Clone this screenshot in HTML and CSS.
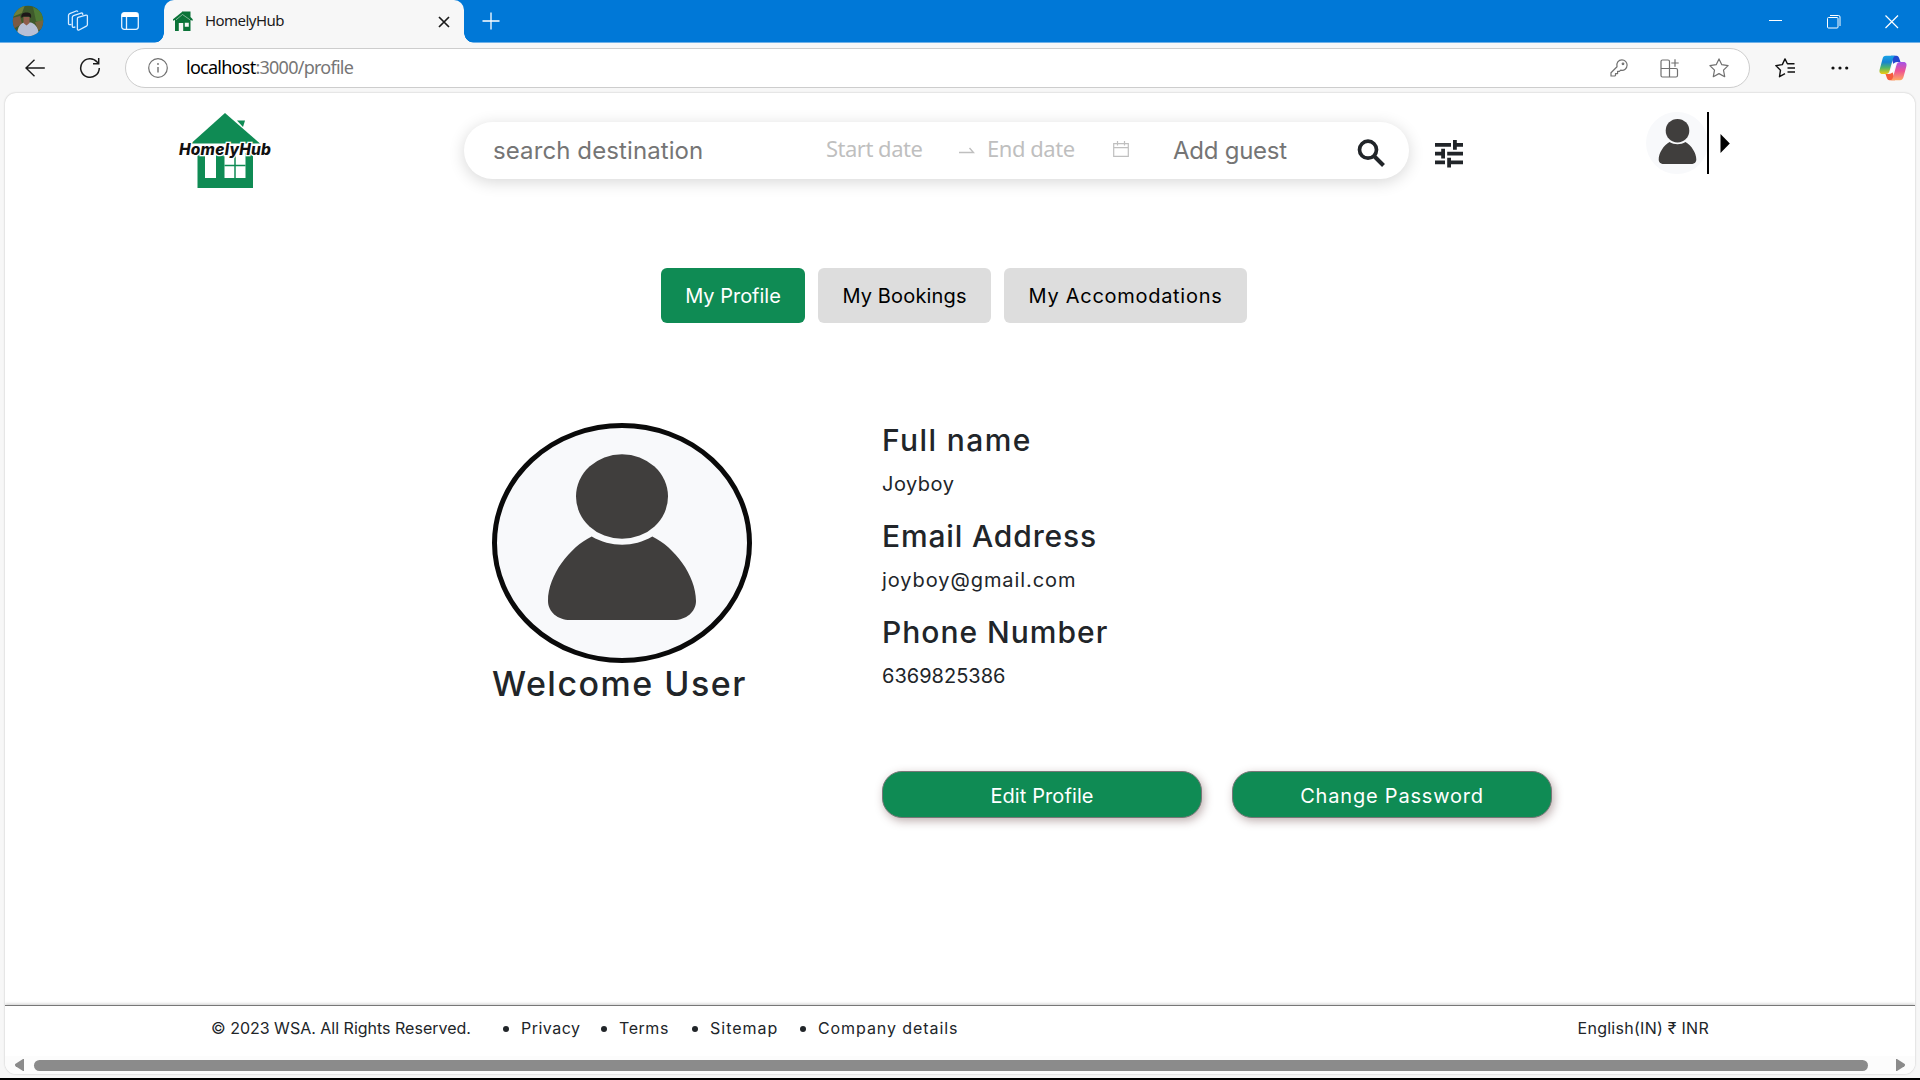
FILE: index.html
```html
<!DOCTYPE html>
<html lang="en">
<head>
<meta charset="utf-8">
<title>HomelyHub</title>
<link rel="stylesheet" href="styles.css">
</head>
<body>
<div class="browser">
  <div class="tabbar">
    <svg class="user" width="32" height="32" viewBox="0 0 32 32">
      <defs><clipPath id="round"><circle cx="16" cy="16" r="15.2"/></clipPath></defs>
      <g clip-path="url(#round)">
        <rect width="32" height="32" fill="#3f5a2c"/>
        <path d="M0 0h13l-3 8-10 4z" fill="#6d7f3c"/><path d="M21 2l9 5 2 12-8-3z" fill="#4f7a35"/>
        <path d="M0 13l8-2 2 8-9 5z" fill="#7b5a43"/><path d="M23 17l9-2v9l-6 1z" fill="#75643f"/>
        <path d="M5 32c0-8 2-13 7-14.500h7c5 1.500 8 6.500 8 14.500z" fill="#b9c0d6"/>
        <path d="M11.500 12h6v6l-3 2.500-3-2.500z" fill="#8f5d4c"/>
        <path d="M9.500 13c-1-4.500 2-5.500 5-5.500s5.500 1 4.500 5.500l-2-1.500h-5.500z" fill="#1d1718"/>
      </g>
    </svg>
    <svg class="workspaces" width="22" height="22" viewBox="0 0 22 22" fill="none" stroke="#d9ecff" stroke-width="1.300" stroke-linejoin="round">
      <path d="M11 7.300l7.900-2.200c.9-.2 1.500.3 1.500 1.100v8.200c0 .8-.4 1.400-1 1.700l-7.300 3.900c-.9.400-1.700 0-1.700-.9V8.600c0-.7.2-1.100.6-1.300z"/>
      <path d="M8.300 17l-1.600.3c-.8.100-1.400-.3-1.400-1V7.500c0-.9.4-1.500 1.200-1.900l7.600-2.500c.9-.3 1.500 0 1.600.8l.1 1"/>
      <path d="M4.500 14.500l-1.500.2c-.9.100-1.500-.4-1.500-1.100V5.500c0-.9.400-1.500 1.200-1.900L9.200 1c.9-.3 1.400 0 1.600.7"/>
    </svg>
    <svg class="vertical-tabs" width="18" height="18" viewBox="0 0 18 18">
      <rect x=".7" y=".7" width="16.600" height="16.600" rx="2.500" fill="none" stroke="#e4f1ff" stroke-width="1.300"/>
      <path d="M.7 5V3a2.300 2.300 0 0 1 2.300-2.300h12A2.300 2.300 0 0 1 17.300 3v2z" fill="#fff"/><path d="M5.500 5v12" stroke="#e4f1ff" stroke-width="1.300"/>
    </svg>
    <div class="tab">
      <svg class="favicon" width="20" height="20" viewBox="0 0 20 20" fill="#0b7338">
        <path d="M9 1L0 8.200v1.600L2 9v11h15.500V9l2.200.8V8.200L17.500 6V.500H9z"/>
        <path d="M5.800 12h4.400v8H5.800zM11.800 11.800h4v4h-4z" fill="#f7f7f7"/>
        <path d="M3 8.800L9.500 3.500l7.500 5.300" fill="none" stroke="#f7f7f7" stroke-width=".5"/>
      </svg>
      <span class="tab-title">HomelyHub</span>
      <svg width="12" height="12" viewBox="0 0 12 12" stroke="#1b1b1b" stroke-width="1.700"><path d="M1 1l10 10M11 1L1 11"/></svg>
    </div>
    <svg class="new-tab" width="18" height="18" viewBox="0 0 18 18" stroke="#fff" stroke-width="1.300"><path d="M9 .5v17M.5 9h17"/></svg>
    <div class="window-controls">
      <svg width="14" height="14" viewBox="0 0 14 14" stroke="#fff"><path d="M0 5.500h13"/></svg>
      <svg width="14" height="14" viewBox="0 0 14 14" stroke="#fff" fill="none"><rect x=".5" y="2.500" width="10.500" height="10.500" rx="1"/><path d="M3 .5h8.500a1.500 1.500 0 0 1 1.500 1.500v9"/></svg>
      <svg width="14" height="14" viewBox="0 0 14 14" stroke="#fff" stroke-width="1.200"><path d="M.5.500l12.500 12.500M13 .5L.5 13"/></svg>
    </div>
  </div>
  <div class="toolbar">
    <svg class="back" width="20" height="18" viewBox="0 0 20 18" fill="none" stroke="#1b1b1b" stroke-width="1.400"><path d="M19.800 9H1M9.500.7L1 9l8.500 8.300"/></svg>
    <svg class="reload" width="22" height="22" viewBox="0 0 22 22" fill="none" stroke="#1b1b1b" stroke-width="1.500"><path d="M20.300 11a9.300 9.300 0 1 1-2.200-6L19.500 6.500M19.700 1v5.800H14"/></svg>
    <div class="address">
      <svg class="info" width="20" height="20" viewBox="0 0 20 20" fill="none" stroke="#707070" stroke-width="1.200"><circle cx="10" cy="10" r="9.300"/><path d="M10 9v5.500" stroke-width="1.400"/><circle cx="10" cy="6" r=".9" fill="#707070" stroke="none"/></svg>
      <div class="url"><span class="host">localhost</span>:3000/profile</div>
      <svg class="key" width="18" height="18" viewBox="0 0 18 18" fill="none" stroke="#707070" stroke-width="1.200" stroke-linejoin="round"><path d="M7 7.800C6 4 8.500.900 11.900.900a5.200 5.200 0 0 1 5.200 5.200c0 3.500-3 5.800-6.400 5l-1.300 1.300H7.600v2.200H5.500v1.800L4.800 17H1v-3.300z"/><circle cx="13" cy="4.800" r=".8"/></svg>
      <svg class="apps" width="19" height="19" viewBox="0 0 19 19" fill="none" stroke="#707070" stroke-width="1.200"><path d="M9.500 9.500V2.500a1.500 1.500 0 0 0-1.500-1.500H2.500A1.500 1.500 0 0 0 1 2.500v14A1.500 1.500 0 0 0 2.500 18h13.500a1.500 1.500 0 0 0 1.500-1.500V11a1.500 1.500 0 0 0-1.500-1.500H1M9.500 9.500V18M15 .3v7.400M11.300 4h7.400"/></svg>
      <svg class="star" width="20" height="20" viewBox="0 0 20 20" fill="none" stroke="#707070" stroke-width="1.200" stroke-linejoin="round"><path d="M10 .9l2.800 5.800 6.300.9-4.600 4.500 1.200 6.600L10 15.600l-5.700 3.100 1.200-6.600L.9 7.600l6.300-.9z"/></svg>
    </div>
    <svg class="favorites" width="20" height="20" viewBox="0 0 20 20" fill="none" stroke="#111" stroke-width="1.400" stroke-linejoin="round"><path d="M19.500 5.700H12.400L10 .9 7.300 6.600.8 7.600l4.700 4.600-1 6.500 5.500-3.100M12.500 10h7.500M12.500 14h7.500"/></svg>
    <svg class="more" width="18" height="4" viewBox="0 0 18 4" fill="#111"><circle cx="2" cy="2" r="1.600"/><circle cx="9" cy="2" r="1.600"/><circle cx="15.700" cy="2" r="1.600"/></svg>
    <svg class="copilot" width="28" height="26" viewBox="0 0 28 26">
      <defs>
        <linearGradient id="cool" x1="0" y1="0" x2="0" y2="1"><stop offset="0" stop-color="#19a3e6"/><stop offset=".35" stop-color="#1683d3"/><stop offset=".65" stop-color="#4fb56a"/><stop offset="1" stop-color="#f2cb10"/></linearGradient>
        <linearGradient id="warm" x1="0" y1="0" x2="0" y2="1"><stop offset="0" stop-color="#a354e8"/><stop offset=".5" stop-color="#ee5393"/><stop offset="1" stop-color="#ffaa62"/></linearGradient>
      </defs>
      <path d="M12 .8h5.500c1.500 0 2.200 1 2.700 2.500L21.500 7H18c-2 0-3 1-3.500 2.500z" fill="#2347cf"/>
      <path d="M16 25.200h-5.500c-1.500 0-2.200-1-2.700-2.500L6.500 19H10c2 0 3-1 3.500-2.500z" fill="#f65c3c"/>
      <path d="M7 .8h9.500c-1.500.4-2 1.500-2.500 3L10.500 16c-.6 2-1.500 3-3.500 3H3.500C.5 19 0 16.500.8 14L3.500 4C4 2 5 .8 7 .8z" fill="url(#cool)"/>
      <path d="M21 25.200h-9.500c1.500-.4 2-1.500 2.500-3L17.500 10c.6-2 1.500-3 3.500-3h3.500c3 0 3.500 2.500 2.700 5L24.500 22c-.5 2-1.500 3.200-3.500 3.200z" fill="url(#warm)"/>
      <path d="M14.600 8.500h2.600L13.600 17.800h-2.600z" fill="#fff"/>
    </svg>
  </div>

  <div class="page">
    <header class="site-header">
      <svg class="logo" width="96" height="78" viewBox="0 0 96 78">
        <path d="M48 1L14 31.500h69z" fill="#0f8b54"/>
        <path d="M60 8.500h8L66 15z" fill="#0f8b54"/>
        <path d="M20.500 41H76v35H20.500z" fill="#0f8b54"/>
        <path d="M28 38h11v28H28zM47.500 38h21v28h-21z" fill="#fff"/>
        <path d="M58 43v23M47.500 53.500h21" stroke="#0f8b54" stroke-width="1.500"/>
        <text class="logo-text" x="2" y="42.500" textLength="92">HomelyHub</text>
      </svg>
      <div class="search">
        <span class="destination">search destination</span>
        <span class="date start">Start date</span>
        <svg class="swap" width="16" height="8" viewBox="0 0 16 8" fill="none" stroke="#bfbfbf" stroke-width="1.400"><path d="M0 5.500h14.500L10.500 1"/></svg>
        <span class="date end">End date</span>
        <svg class="calendar" width="16" height="16" viewBox="0 0 16 16" fill="none" stroke="#bfbfbf" stroke-width="1.200"><path d="M.7 2.600h14.600v12.700H.7zM.7 6.700h14.600M4.500 0v4.500M11.500 0v4.500"/></svg>
        <span class="guest">Add guest</span>
        <svg class="magnifier" width="29" height="29" viewBox="0 0 29 29" fill="none" stroke="#212529"><circle cx="11" cy="10.700" r="8.500" stroke-width="3.700"/><path d="M16.500 16.500l10 10" stroke-width="4"/></svg>
      </div>
      <svg class="tune" width="28" height="28" viewBox="0 0 28 28" fill="#212529"><path d="M0 3h16v3.700H0zM18 0h3.800v3H28v3.700h-6.200v3H18zM0 11.800h6.200v-3H10v9.800H6.200v-3H0zM12.200 11.800H28v3.700H12.200zM0 20.600h10v3.700H0zM12.200 17.700H16v2.900h12v3.700H16v3.200h-3.800z"/></svg>
      <svg class="mini-avatar" width="62" height="62" viewBox="0 0 62 62">
        <circle cx="31" cy="31" r="31" fill="#f8f9fb"/>
        <circle cx="31.500" cy="18.700" r="11.800" fill="#403e3d"/>
        <path d="M23.500 30c5 3 11 3 16 0 6 3.500 10.800 11 10.800 17.500 0 3-2.300 4.500-5 4.500H17.700c-2.700 0-5-1.500-5-4.500 0-6.500 4.800-14 10.800-17.500z" fill="#403e3d"/>
      </svg>
      <div class="divider"></div>
      <svg class="caret" width="10" height="19" viewBox="0 0 10 19"><path d="M.5 0L9.800 9.500.5 19z"/></svg>
    </header>

    <nav class="tabs">
      <a class="pill active">My Profile</a>
      <a class="pill bookings">My Bookings</a>
      <a class="pill places">My Accomodations</a>
    </nav>

    <main class="profile">
      <section class="identity">
        <svg width="260" height="240" viewBox="0 0 260 240">
          <ellipse cx="130" cy="120" rx="127.500" ry="117.500" fill="#f8f9fb" stroke="#0a0a0a" stroke-width="5"/>
          <ellipse cx="130" cy="73.500" rx="46" ry="42.300" fill="#403e3d"/>
          <path d="M99.700 113.500c19 11 42 11 60.600 0C182 124 204 152 204 178c0 11-10 19-22 19H78c-12 0-22-8-22-19 0-26 22-54 43.700-64.500z" fill="#403e3d"/>
        </svg>
        <h1 class="welcome">Welcome User</h1>
      </section>
      <section class="details">
        <h2 class="label name">Full name</h2><p class="value joy">Joyboy</p>
        <h2 class="label mail">Email Address</h2><p class="value email">joyboy@gmail.com</p>
        <h2 class="label phone">Phone Number</h2><p class="value">6369825386</p>
        <div class="actions"><button class="action edit">Edit Profile</button><button class="action password">Change Password</button></div>
      </section>
    </main>

    <footer class="site-footer">
      <span class="copyright">© 2023 WSA. All Rights Reserved.</span>
      <ul class="links"><li class="privacy">Privacy</li><li class="terms">Terms</li><li class="sitemap">Sitemap</li><li class="company">Company details</li></ul>
      <span class="locale">English(IN) ₹ INR</span>
    </footer>
    <div class="scrollbar">
      <svg width="10" height="12" viewBox="0 0 10 12" fill="#8b8b8b"><path d="M9 0v12H8L.6 7.200a1.500 1.500 0 0 1 0-2.400L8 0z"/></svg>
      <div class="thumb"></div>
      <svg width="10" height="12" viewBox="0 0 10 12" fill="#8b8b8b"><path d="M1 0v12h1l7.400-4.800a1.500 1.500 0 0 0 0-2.400L2 0z"/></svg>
    </div>
  </div>
</div>
</body>
</html>
```
FILE: styles.css
```css
* { box-sizing: border-box; }
body { margin: 0; background: #000; font-family: Inter, sans-serif; color: #212529; overflow: hidden; }
svg { display: block; flex: none; }
.browser { width: 1920px; height: 1078px; background: #f7f7f7; display: flex; flex-direction: column; }

/* window chrome */
.tabbar { height: 43px; background: #0078d7; border-bottom: 1px solid #6fb1e8; display: flex; align-items: flex-start; flex: none; }
.user { margin: 5px 0 0 12px; }
.workspaces { margin: 10px 0 0 23px; }
.vertical-tabs { margin: 12px 0 0 32px; }
.tab { width: 300px; height: 43px; margin-left: 25px; padding: 0 14px 0 9px; background: #f7f7f7; border-radius: 10px 10px 0 0; display: flex; align-items: center; position: relative; }
.tab::before, .tab::after { content: ""; position: absolute; bottom: 0; width: 10px; height: 10px; }
.tab::before { left: -10px; background: radial-gradient(circle at 0 0, transparent 9.5px, #f7f7f7 10px); }
.tab::after { right: -10px; background: radial-gradient(circle at 100% 0, transparent 9.5px, #f7f7f7 10px); }
.favicon { margin: 0 12px 1px 0; }
.tab-title { flex: 1; font: 15px/40px "Noto Sans", sans-serif; letter-spacing: -0.55px; color: #1b1b1b; height: 43px; }
.new-tab { margin: 12px 0 0 18px; }
.window-controls { margin: 15px 21px 0 auto; display: flex; gap: 44px; }

.toolbar { height: 50px; display: flex; align-items: center; flex: none; }
.back { margin-left: 25px; }
.reload { margin-left: 34px; }
.address { width: 1625px; height: 40px; margin: 0 25px 0 24px; background: #fff; border: 1px solid #cdcdcd; border-radius: 20px; display: flex; align-items: center; padding: 0 20px 0 22px; }
.url { flex: 1; margin-left: 18px; height: 38px; font: 18px/36px "Noto Sans", sans-serif; letter-spacing: -0.74px; color: #767676; }
.host { color: #000; }
.key { margin-right: 32px; }
.apps { margin-right: 30px; }
.more { margin-left: 36px; }
.copilot { margin-left: 30px; }

/* page */
.page { width: 1910px; height: 981px; margin-left: 5px; background: #fff; border-radius: 11px; box-shadow: 0 0 2px rgba(0,0,0,.25); display: flex; flex-direction: column; overflow: hidden; }
.site-header { height: 98px; padding: 18px 0 0 172px; display: flex; align-items: flex-start; flex: none; }
.logo { margin-top: 1px; }
.logo-text { font: italic 800 15.500px Inter, sans-serif; fill: #111; stroke: #fff; stroke-width: 2.500px; paint-order: stroke; }
.search { width: 945px; height: 57px; margin: 11px 0 0 191px; border-radius: 29px; background: #fff; box-shadow: 0 3px 16px rgba(0,0,0,.16); display: flex; align-items: center; font-size: 24px; line-height: 56px; color: #757575; }
.destination { width: 332px; margin-left: 29px; letter-spacing: .1px; }
.date { font: 22px/52px "Noto Sans", sans-serif; color: #bfbfbf; letter-spacing: -.5px; height: 57px; }
.start { width: 134px; padding-left: 1px; }
.swap { margin-right: 12px; }
.end { width: 126px; letter-spacing: -.45px; }
.calendar { margin-top: -4px; }
.guest { width: 184px; margin-left: 44px; letter-spacing: -.25px; }
.magnifier { margin-top: 5px; }
.tune { margin: 29px 0 0 26px; }
.mini-avatar { margin: 1px 0 0 183px; }
.divider { width: 2px; height: 62px; margin: 1px 0 0 -1px; background: #000; }
.caret { margin: 23px 0 0 11px; }

.tabs { margin: 77px 0 0 656px; display: flex; gap: 13px; height: 55px; flex: none; }
.pill { height: 55px; width: 144px; border-radius: 6px; background: #ddd; color: #000; font-size: 20px; line-height: 57px; text-align: center; white-space: nowrap; }
.active { background: #0f8b54; color: #fff; }
.bookings { width: 173px; letter-spacing: .15px; }
.places { width: 243px; letter-spacing: .72px; }

.profile { margin: 100px 0 0 487px; display: flex; gap: 130px; flex: 1; }
.identity { width: 260px; }
.welcome { margin: 0; font-size: 34px; font-weight: 500; line-height: 41px; letter-spacing: 1.5px; white-space: nowrap; }
.label { margin: 0; font-size: 30px; font-weight: 500; line-height: 34px; height: 46px; letter-spacing: 1.4px; }
.mail { letter-spacing: .85px; }
.phone { letter-spacing: 1px; }
.value { margin: 0 0 20px; font-size: 20px; line-height: 30px; }
.joy { letter-spacing: .5px; }
.email { letter-spacing: .93px; }
.actions { display: flex; gap: 30px; margin-top: 80px; }
.action { width: 320px; height: 47px; border: 1px solid #777; border-radius: 20px; background: #0f8b54; color: #fff; font: 20px/45px Inter, sans-serif; padding: 2px 0 0; box-shadow: 2px 3px 10px rgba(70,25,25,.35); letter-spacing: .1px; }
.password { letter-spacing: .8px; }

.site-footer { height: 51px; border-top: 1px solid #777; box-shadow: 0 -1px 3px rgba(0,0,0,.2); padding: 0 206px 0 206px; display: flex; font-size: 16px; line-height: 44px; flex: none; }
.copyright { width: 292px; }
.links { list-style: none; margin: 0; padding: 0; display: flex; flex: 1; }
.links li { display: flex; align-items: center; height: 44px; }
.links li::before { content: ""; width: 6px; height: 6px; border-radius: 3px; background: #212529; margin: 2px 12px 0 0; }
.privacy { width: 98px; letter-spacing: .5px; }
.terms { width: 91px; letter-spacing: .55px; }
.sitemap { width: 108px; letter-spacing: 1px; }
.company { letter-spacing: .92px; white-space: nowrap; }
.locale { letter-spacing: .27px; }

.scrollbar { height: 18px; background: #fcfcfc; display: flex; align-items: center; padding: 0 10px 0 10px; flex: none; }
.thumb { width: 1834px; height: 11px; border-radius: 6px; background: #8b8b8b; margin: 0 auto 0 9px; }
```
